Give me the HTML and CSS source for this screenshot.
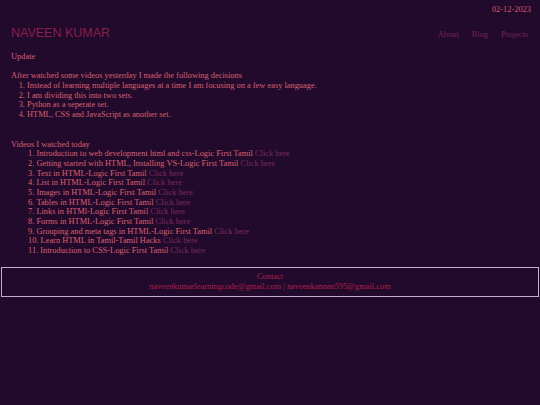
FILE: index.html
```html
<!DOCTYPE html>
<html lang="en">
<head>
<meta charset="utf-8">
<title>Naveen Kumar</title>
<link rel="stylesheet" href="styles.css">
</head>
<body>
<div class="date">02-12-2023</div>
<header class="header">
  <h1 class="title">NAVEEN KUMAR</h1>
  <nav class="nav">
    <a href="#">About</a>
    <a href="#">Blog</a>
    <a href="#">Projects</a>
  </nav>
</header>
<main class="content">
  <p class="update">Update</p>
  <p class="para">After watched some videos yesterday I made the following decisions</p>
  <ol class="decisions">
    <li>Instead of learning multiple languages at a time I am focusing on a few easy language.</li>
    <li>I am dividing this into two sets.</li>
    <li>Python as a seperate set.</li>
    <li>HTML, CSS and JavaScript as another set.</li>
  </ol>
  <p class="videos-title">Videos I watched today</p>
  <ol class="videos">
    <li>Introduction to web development html and css-Logic First Tamil <a href="#">Click here</a></li>
    <li>Getting started with HTML, Installing VS-Logic First Tamil <a href="#">Click here</a></li>
    <li>Text in HTML-Logic First Tamil <a href="#">Click here</a></li>
    <li>List in HTML-Logic First Tamil <a href="#">Click here</a></li>
    <li>Images in HTML-Logic First Tamil <a href="#">Click here</a></li>
    <li>Tables in HTML-Logic First Tamil <a href="#">Click here</a></li>
    <li>Links in HTMl-Logic First Tamil <a href="#">Click here</a></li>
    <li>Forms in HTML-Logic First Tamil <a href="#">Click here</a></li>
    <li>Grouping and meta tags in HTML-Logic First Tamil <a href="#">Click here</a></li>
    <li>Learn HTML in Tamil-Tamil Hacks <a href="#">Click here</a></li>
    <li>Introduction to CSS-Logic First Tamil <a href="#">Click here</a></li>
  </ol>
</main>
<footer class="footer">
  <div class="contact">Contact</div>
  <div class="emails">naveenkumarlearningcode@gmail.com | naveenkannan595@gmail.com</div>
</footer>
</body>
</html>
```
FILE: styles.css
```css
html, body {
  background: #220a2c;
}
body {
  margin: 0;
  font-family: "Liberation Serif", "Times New Roman", serif;
  font-size: 8.4px;
  line-height: 9.65px;
  color: #da6070;
}
a {
  text-decoration: none;
}
.date {
  text-align: right;
  padding: 5px 9px 0 0;
  color: #d45a6e;
}
.header {
  display: flex;
  justify-content: space-between;
  align-items: baseline;
  padding: 0 12px 0 11px;
  margin-top: 11px;
}
.title {
  margin: 0;
  font-family: "Liberation Sans", Arial, sans-serif;
  font-weight: normal;
  font-size: 12.5px;
  line-height: 14.4px;
  color: #8a1f50;
}
.nav {
  display: flex;
  gap: 13px;
}
.nav a {
  color: #762555;
}
.content {
  padding: 0 11px;
}
.content p {
  margin: 0;
}
.update {
  padding-top: 12px;
}
.para {
  padding-top: 9.6px;
}
.decisions {
  margin: 0;
  padding-left: 16px;
}
.videos-title {
  padding-top: 20px;
}
.videos {
  margin: 0;
  padding-left: 17px;
  list-style-position: inside;
}
.videos a {
  color: #7b2a5c;
}
.footer {
  margin: 11.5px 1px 0;
  border: 1.5px solid #c8acd0;
  padding: 4.5px 0 4px;
  text-align: center;
  color: #ad1f4a;
}
```
